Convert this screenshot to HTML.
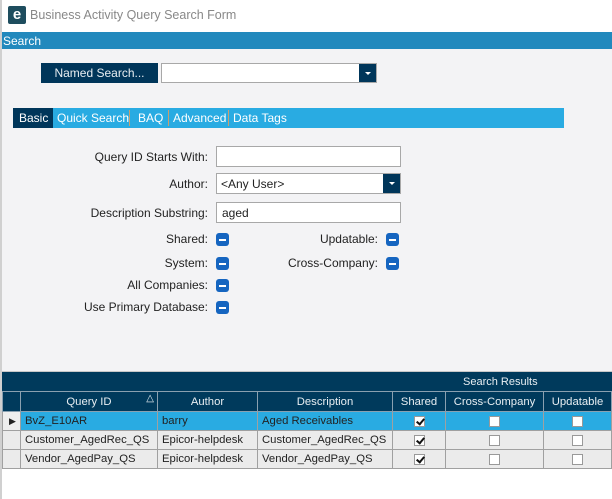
<!DOCTYPE html>
<html><head><style>
*{box-sizing:border-box;margin:0;padding:0}
body{width:612px;height:499px;overflow:hidden;background:#fff;font-family:"Liberation Sans",sans-serif;font-size:12px;color:#222;position:relative}
.abs{position:absolute}
.lbl{position:absolute;text-align:right;font-size:12px;color:#222}
.inp{position:absolute;background:#fff;border:1px solid #a8a8a8;height:21px;font-size:12px;padding:3px 5px}
.tog{position:absolute;width:13px;height:13px;background:#1565c0;border-radius:3px}
.tog:after{content:"";position:absolute;left:3px;top:6px;width:7px;height:1.5px;background:#fff}
.dd{position:absolute;right:0;top:0;width:17px;height:19px;background:#00365a}
.dd:after{content:"";position:absolute;left:6px;top:8px;border-left:3px solid transparent;border-right:3px solid transparent;border-top:3px solid #fff}
table{border-collapse:collapse;position:absolute;left:2px;top:391px;font-size:11.3px;table-layout:fixed;width:609px}
td{height:19px;border:1px solid #a0a0a0;padding:0 0 0 4px;white-space:nowrap;overflow:hidden}
th{height:20px;background:#003a5c;color:#e8eef2;font-weight:normal;border:1px solid #8aa0b0;text-align:center;overflow:hidden;white-space:nowrap}
.cb{display:inline-block;width:11px;height:11px;background:#fff;border:1px solid #999;vertical-align:middle;position:relative}
.ck:after{content:"";position:absolute;left:3px;top:0px;width:3px;height:6px;border:solid #111;border-width:0 2px 2px 0;transform:rotate(40deg)}
.c{text-align:center;padding:0}
</style></head><body>
<div class="abs" style="left:0;top:0;width:2px;height:499px;background:#d0d0d0"></div>
<div class="abs" style="left:8px;top:6px;width:18px;height:18px;background:#1e4d5e;border-radius:2px;color:#fff;font-weight:bold;font-size:15px;line-height:17px;text-align:center">e</div>
<div class="abs" style="left:30px;top:8px;font-size:12.5px;color:#888">Business Activity Query Search Form</div>
<div class="abs" style="left:2px;top:32px;width:610px;height:17px;background:#2289bd;color:#fff;font-size:12px;padding:2px 1px">Search</div>
<div class="abs" style="left:2px;top:49px;width:610px;height:322px;background:#f3f3f5"></div>
<div class="abs" style="left:41px;top:63px;width:117px;height:20px;background:#00365a;color:#e8eef2;text-align:center;line-height:20px">Named Search...</div>
<div class="inp" style="left:161px;top:63px;width:216px;height:20px"><div class="dd" style="height:18px"></div></div>
<div class="abs" style="left:13px;top:108px;width:551px;height:20px;background:#29abe2"></div>
<div class="abs" style="left:13px;top:108px;width:40px;height:20px;background:#00365a;color:#fff;line-height:20px;padding-left:6px">Basic</div>
<div class="abs" style="left:57px;top:111px;color:#fff;line-height:14px">Quick Search</div>
<div class="abs" style="left:129px;top:110px;width:1px;height:16px;background:#c8a070"></div>
<div class="abs" style="left:138px;top:111px;color:#fff;line-height:14px">BAQ</div>
<div class="abs" style="left:168px;top:110px;width:1px;height:16px;background:#c8a070"></div>
<div class="abs" style="left:173px;top:111px;color:#fff;line-height:14px">Advanced</div>
<div class="abs" style="left:228px;top:110px;width:1px;height:16px;background:#c8a070"></div>
<div class="abs" style="left:233px;top:111px;color:#fff;line-height:14px">Data Tags</div>
<div class="lbl" style="right:404px;top:150px">Query ID Starts With:</div>
<div class="inp" style="left:216px;top:146px;width:185px"></div>
<div class="lbl" style="right:404px;top:177px">Author:</div>
<div class="inp" style="left:216px;top:173px;width:185px;padding-left:4px">&lt;Any User&gt;<div class="dd"></div></div>
<div class="lbl" style="right:404px;top:206px">Description Substring:</div>
<div class="inp" style="left:216px;top:202px;width:185px">aged</div>
<div class="lbl" style="right:404px;top:232px">Shared:</div><div class="tog" style="left:216px;top:233px"></div>
<div class="lbl" style="right:234px;top:232px">Updatable:</div><div class="tog" style="left:386px;top:233px"></div>
<div class="lbl" style="right:404px;top:256px">System:</div><div class="tog" style="left:216px;top:257px"></div>
<div class="lbl" style="right:234px;top:256px">Cross-Company:</div><div class="tog" style="left:386px;top:257px"></div>
<div class="lbl" style="right:404px;top:278px">All Companies:</div><div class="tog" style="left:216px;top:279px"></div>
<div class="lbl" style="right:404px;top:300px">Use Primary Database:</div><div class="tog" style="left:216px;top:301px"></div>
<div class="abs" style="left:2px;top:371px;width:610px;height:1px;background:#c8c8c8"></div>
<div class="abs" style="left:2px;top:372px;width:610px;height:19px;background:#003a5c;color:#e8eef2;padding:4px 0 0 461px;font-size:11px">Search Results</div>
<table>
<colgroup><col style="width:18px"><col style="width:137px"><col style="width:100px"><col style="width:135px"><col style="width:53px"><col style="width:98px"><col style="width:68px"></colgroup>
<tr><th></th><th style="position:relative">Query ID<span style="position:absolute;right:3px;top:1px;font-size:10px">&#9651;</span></th><th>Author</th><th>Description</th><th>Shared</th><th>Cross-Company</th><th>Updatable</th></tr>
<tr style="background:#29abe2"><td style="background:#eee;padding:0 0 0 6px;font-size:9px">&#9654;</td><td>BvZ_E10AR</td><td>barry</td><td>Aged Receivables</td><td class="c"><span class="cb ck"></span></td><td class="c"><span class="cb"></span></td><td class="c"><span class="cb"></span></td></tr>
<tr style="background:#ebebeb"><td></td><td>Customer_AgedRec_QS</td><td>Epicor-helpdesk</td><td>Customer_AgedRec_QS</td><td class="c"><span class="cb ck"></span></td><td class="c"><span class="cb"></span></td><td class="c"><span class="cb"></span></td></tr>
<tr style="background:#ebebeb"><td></td><td>Vendor_AgedPay_QS</td><td>Epicor-helpdesk</td><td>Vendor_AgedPay_QS</td><td class="c"><span class="cb ck"></span></td><td class="c"><span class="cb"></span></td><td class="c"><span class="cb"></span></td></tr>
</table>
</body></html>
